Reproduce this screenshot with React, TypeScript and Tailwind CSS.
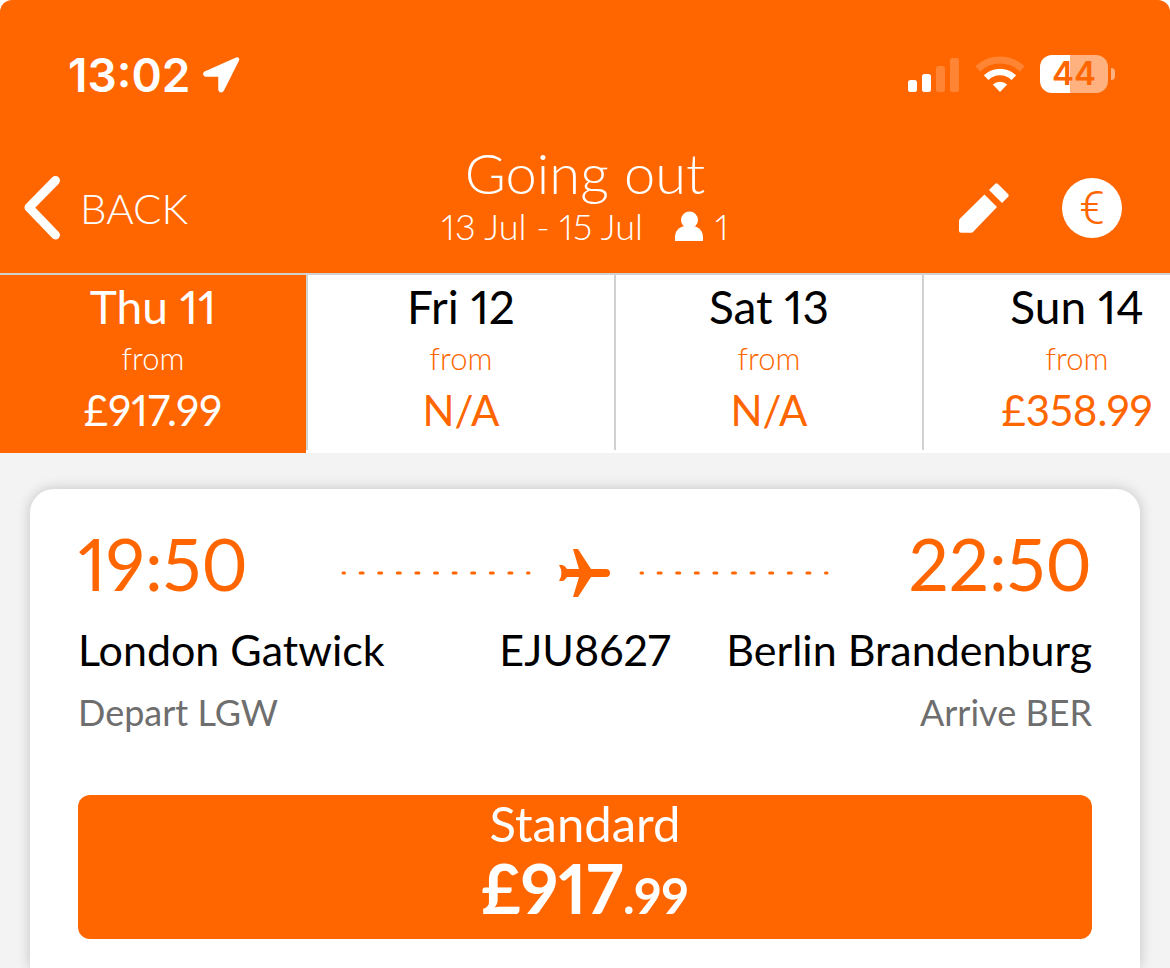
import React, { useState } from "react";

type Day = {
  label: string;
  price: string;
};

const days: Day[] = [
  { label: "Thu 11", price: "£917.99" },
  { label: "Fri 12", price: "N/A" },
  { label: "Sat 13", price: "N/A" },
  { label: "Sun 14", price: "£358.99" },
];

const StatusBar = () => {
  return (
    <div className="flex h-[142px] items-start justify-between pt-[50px] pr-[55px] pl-[68px]">
      <div className="flex h-[50px] items-center gap-3">
        <span className="font-['Inter',sans-serif] text-[46px] leading-[50px] font-semibold">
          13:02
        </span>
        <svg width="38" height="36" viewBox="0 0 38 36" aria-hidden="true">
          <path
            d="M35 2.500 3.500 16.500Q3 17 4 17.600H18.500V32.500Q19 34 20 32.500z"
            fill="currentColor"
            stroke="currentColor"
            strokeWidth="4.5"
            strokeLinejoin="round"
          />
        </svg>
      </div>

      <div className="flex h-12 items-center">
        <svg width="52" height="36" viewBox="0 0 52 36" fill="currentColor" aria-hidden="true">
          <rect x="0" y="24" width="9" height="12" rx="2.5" />
          <rect x="14" y="18" width="9" height="18" rx="2.5" />
          <rect x="28" y="10" width="9" height="26" rx="2.5" opacity=".2" />
          <rect x="42" y="2" width="9" height="34" rx="2.5" opacity=".2" />
        </svg>
        <svg
          className="ml-4"
          width="48"
          height="36"
          viewBox="0 0 48 36"
          fill="none"
          stroke="currentColor"
          aria-hidden="true"
        >
          <path d="M1.8 12.9a32 32 0 0 1 44.4 0" strokeWidth="7" opacity=".2" />
          <path d="M10.1 21.6a20 20 0 0 1 27.8 0" strokeWidth="6.6" />
          <path d="M24 36l-7.2-7.5a10.8 10.8 0 0 1 14.4 0z" fill="currentColor" stroke="none" />
        </svg>
        <div className="ml-4 flex h-[38px] w-[68px] items-center justify-center rounded-xl bg-[linear-gradient(to_right,#fff_44%,#ffb280_44%)] font-['Inter',sans-serif] text-[33px] font-semibold text-[#ff6600]">
          44
        </div>
        <div className="ml-[3px] h-3 w-1 rounded-r-full bg-[#ffb280]"></div>
      </div>
    </div>
  );
};

const NavBar = () => {
  return (
    <div className="grid h-[131px] grid-cols-[1fr_auto_1fr] items-center px-6 font-light">
      <button className="flex cursor-pointer items-center gap-5 justify-self-start">
        <svg width="36" height="64" viewBox="0 0 36 64" aria-hidden="true">
          <path
            d="M31.5 4.500 5 31.5 31.5 59"
            fill="none"
            stroke="currentColor"
            strokeWidth="9"
            strokeLinecap="round"
            strokeLinejoin="round"
          />
        </svg>
        <span className="text-[42px] leading-[60px]">BACK</span>
      </button>

      <div className="self-start text-center">
        <h1 className="text-[56px] leading-[62px]">Going out</h1>
        <p className="flex items-center justify-center text-[36px] leading-[44px]">
          13 Jul - 15 Jul
          <svg className="ml-8 mr-3" width="28" height="30" viewBox="0 0 28 30" aria-hidden="true">
            <circle cx="14.5" cy="9" r="8.5" fill="currentColor" />
            <path d="M0 30v-4c0-6 4-10 10-11h8c6 1 10 5 10 11v4z" fill="currentColor" />
          </svg>
          1
        </p>
      </div>

      <div className="flex items-center gap-[52px] justify-self-end pr-6">
        <button aria-label="Edit search" className="cursor-pointer">
          <svg width="52" height="50" viewBox="0 0 52 50" fill="currentColor" aria-hidden="true">
            <path d="M26.5 11.5 39 24 15.5 48.5Q14.500 49.800 13 49.800H3Q1 49.800 1 47.800V38Q1 36.500 2 35.500z" />
            <path d="M31 7 37 1Q38.500-.5 40 1L50 11Q51.500 12.500 50 14L44 20z" />
          </svg>
        </button>
        <button
          aria-label="Currency"
          className="size-[60px] cursor-pointer rounded-full bg-white text-center font-['Roboto',sans-serif] text-[46px] leading-[60px] text-[#ff6600]"
        >
          €
        </button>
      </div>
    </div>
  );
};

const DottedLine = () => {
  return (
    <svg width="190" height="4" viewBox="0 0 190 4" aria-hidden="true">
      <path
        d="M2 2h186"
        stroke="currentColor"
        strokeWidth="3"
        strokeLinecap="round"
        strokeDasharray="3 15.6"
        strokeDashoffset="1.5"
      />
    </svg>
  );
};

const FlightCard = () => {
  return (
    <section className="mx-[30px] mt-9 grow rounded-t-3xl bg-white px-12 pt-8 pb-7 shadow-[0_0_14px_rgba(0,0,0,0.2)]">
      <div className="grid grid-cols-[1fr_auto_1fr] items-center text-[#ff6600]">
        <span className="text-[71px] leading-[86px]">19:50</span>
        <div className="flex items-center gap-7 pt-[18px]">
          <DottedLine />
          <svg width="52" height="48" viewBox="0 0 52 48" aria-hidden="true">
            <path
              d="M14 0h5l13 20h15a4 4 0 0 1 0 8H32L19 48h-5l6-20H8l-2 2.500Q4.500 32 3 32H0Q2.500 28 2.500 24T0 16h3q1.500 0 3 1.500L8 20h12z"
              fill="currentColor"
            />
          </svg>
          <DottedLine />
        </div>
        <span className="text-right text-[71px] leading-[86px]">22:50</span>
      </div>

      <div className="grid grid-cols-[1fr_auto_1fr] text-[43px] leading-[86px] whitespace-nowrap text-black">
        <span>London Gatwick</span>
        <span>EJU8627</span>
        <span className="text-right">Berlin Brandenburg</span>
      </div>

      <div className="flex justify-between text-[36px] leading-[38px] text-[#6e6e6e]">
        <span>Depart LGW</span>
        <span>Arrive BER</span>
      </div>

      <button className="mt-16 block h-36 w-full cursor-pointer rounded-xl bg-[#ff6600] pb-[14px] text-white">
        <span className="block text-[49px] leading-[56px]">Standard</span>
        <span className="block text-[68px] leading-[74px] font-bold">
          £917<span className="text-[49px]">.99</span>
        </span>
      </button>
    </section>
  );
};

const App = () => {
  const [selected, setSelected] = useState<number>(0);

  return (
    <div className="flex min-h-screen flex-col overflow-x-hidden bg-[#f3f3f3] font-['Lato',sans-serif] proportional-nums">
      <div className="bg-white">
        <header className="rounded-t-xl bg-[#ff6600] text-white">
          <StatusBar />
          <NavBar />
        </header>
      </div>

      <nav className="flex overflow-hidden border-t-2 border-[#d1d1d1] bg-white">
        {days.map((day, index) => (
          <React.Fragment key={day.label}>
            <button
              onClick={() => setSelected(index)}
              className={`${
                selected === index ? "bg-[#ff6600] text-white" : "text-[#ff6600]"
              } w-[306px] shrink-0 cursor-pointer pb-[10px]`}
            >
              <span
                className={`${
                  selected === index ? "text-white" : "text-black"
                } block text-[46px] leading-[64px]`}
              >
                {day.label}
              </span>
              <span className="block text-[31px] leading-[38px] font-light">from</span>
              <span className="block text-[42px] leading-[66px]">{day.price}</span>
            </button>
            <div className="mb-[3px] w-[2px] shrink-0 bg-[#d1d1d1]"></div>
          </React.Fragment>
        ))}
      </nav>

      <FlightCard />
    </div>
  );
};

export default App;
